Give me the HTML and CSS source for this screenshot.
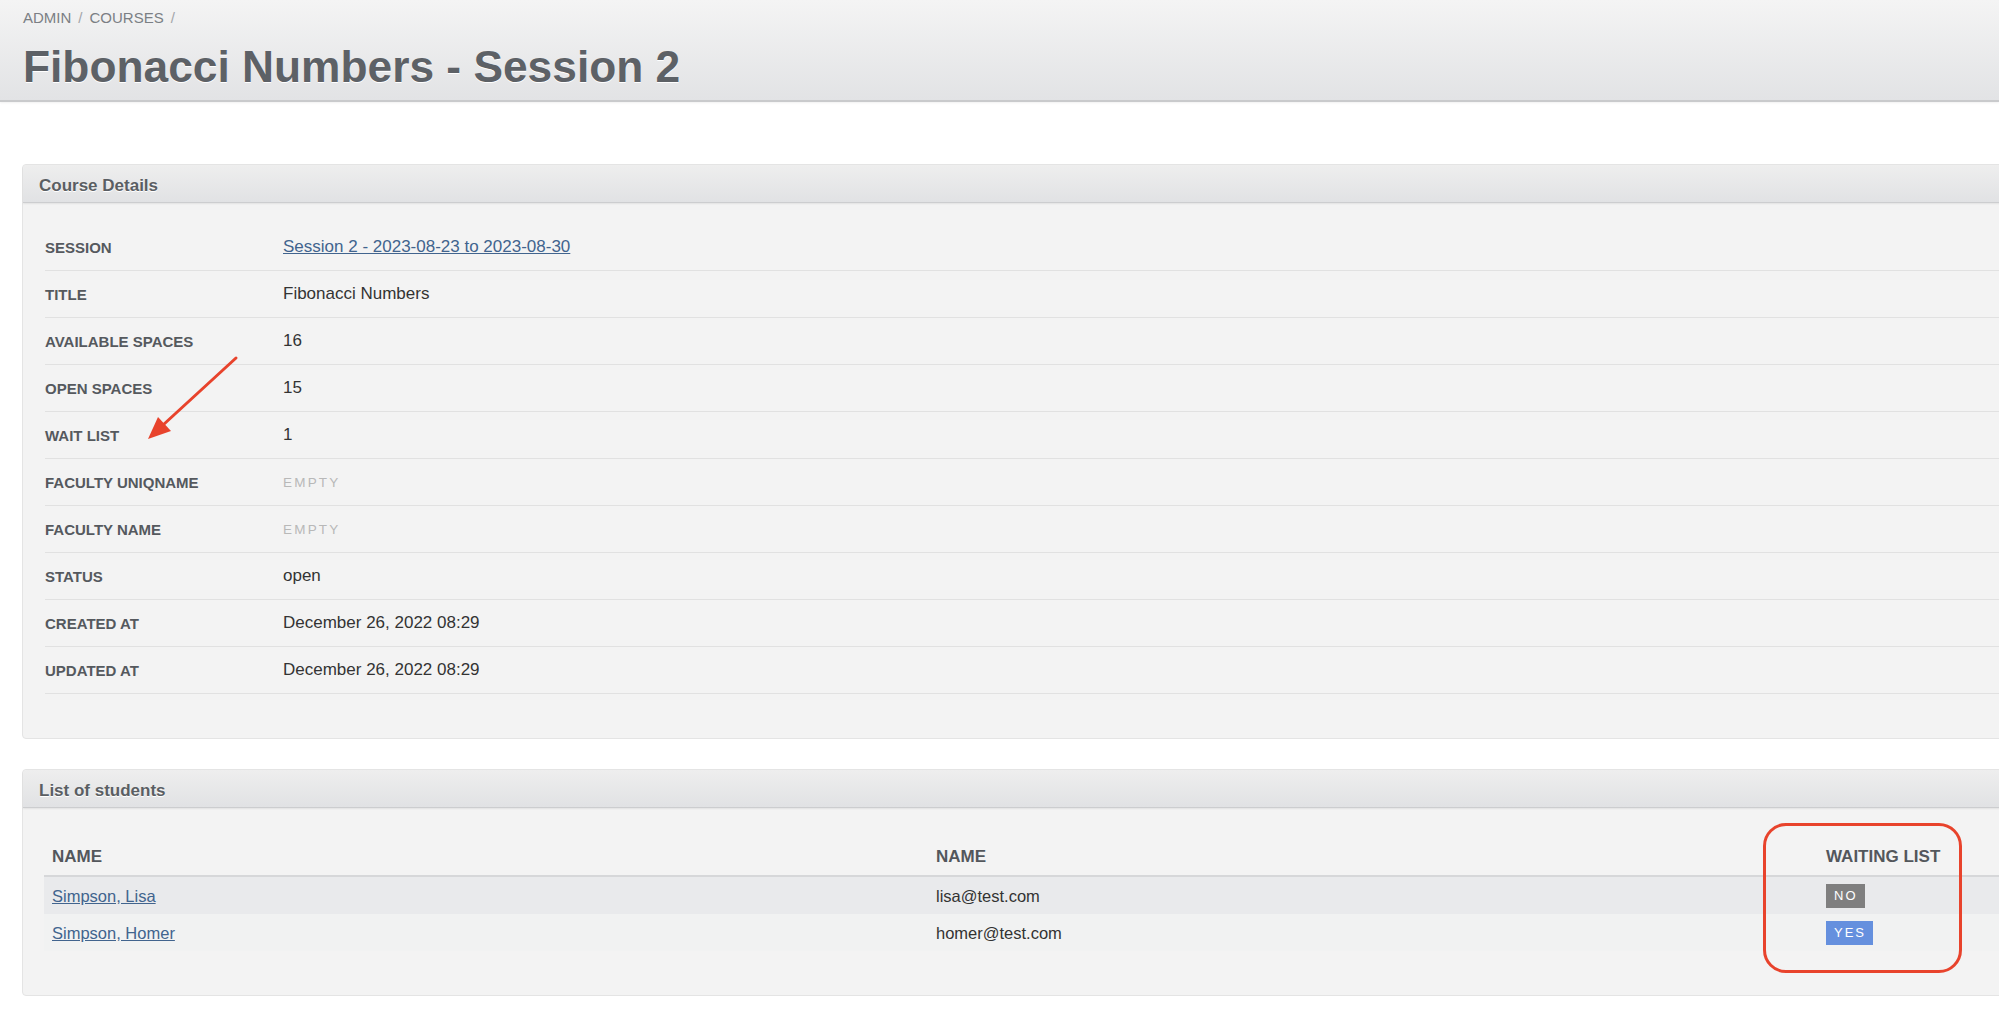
FILE: index.html
```html
<!DOCTYPE html>
<html lang="en">
<head>
<meta charset="utf-8">
<title>Fibonacci Numbers - Session 2</title>
<link rel="stylesheet" href="styles.css">
</head>
<body>
<header class="page-header">
  <nav class="breadcrumb"><span>ADMIN</span><span class="sep">/</span><span>COURSES</span><span class="sep">/</span></nav>
  <h1 class="page-title">Fibonacci Numbers - Session 2</h1>
</header>

<main class="content">
  <section class="panel">
    <div class="panel-heading">Course Details</div>
    <div class="panel-body">
      <dl class="details">
        <div class="detail-row"><dt>SESSION</dt><dd><a href="#">Session 2 - 2023-08-23 to 2023-08-30</a></dd></div>
        <div class="detail-row"><dt>TITLE</dt><dd>Fibonacci Numbers</dd></div>
        <div class="detail-row"><dt>AVAILABLE SPACES</dt><dd>16</dd></div>
        <div class="detail-row"><dt>OPEN SPACES</dt><dd>15</dd></div>
        <div class="detail-row"><dt>WAIT LIST</dt><dd>1</dd></div>
        <div class="detail-row"><dt>FACULTY UNIQNAME</dt><dd><span class="empty">EMPTY</span></dd></div>
        <div class="detail-row"><dt>FACULTY NAME</dt><dd><span class="empty">EMPTY</span></dd></div>
        <div class="detail-row"><dt>STATUS</dt><dd>open</dd></div>
        <div class="detail-row"><dt>CREATED AT</dt><dd>December 26, 2022 08:29</dd></div>
        <div class="detail-row"><dt>UPDATED AT</dt><dd>December 26, 2022 08:29</dd></div>
      </dl>
    </div>
  </section>

  <section class="panel">
    <div class="panel-heading">List of students</div>
    <div class="panel-body table-body">
      <table class="students">
        <colgroup><col class="c1"><col class="c2"><col></colgroup>
        <thead>
          <tr><th>NAME</th><th>NAME</th><th>WAITING LIST</th></tr>
        </thead>
        <tbody>
          <tr class="odd"><td><a href="#">Simpson, Lisa</a></td><td>lisa@test.com</td><td><span class="badge badge-no">NO</span></td></tr>
          <tr class="even"><td><a href="#">Simpson, Homer</a></td><td>homer@test.com</td><td><span class="badge badge-yes">YES</span></td></tr>
        </tbody>
      </table>
    </div>
  </section>
</main>

<svg class="annot-arrow" viewBox="140 350 105 95" width="105" height="95" aria-hidden="true">
  <line x1="236" y1="358" x2="163" y2="425" stroke="#e8432c" stroke-width="3" stroke-linecap="round"/>
  <polygon points="148,439 171,431 158,417" fill="#e8432c"/>
</svg>
<div class="annot-box" aria-hidden="true"></div>
</body>
</html>
```

FILE: styles.css
```css
html, body {
  margin: 0;
  padding: 0;
  overflow: hidden;
  background: #ffffff;
}

body {
  font-family: "Liberation Sans", Arial, Helvetica, sans-serif;
  color: #333333;
  position: relative;
  min-height: 1014px;
}

.page-header {
  background: linear-gradient(to bottom, #f4f4f4 0%, #e2e3e5 100%);
  border-bottom: 2px solid #c9cacc;
  box-shadow: 0 1px 2px rgba(0, 0, 0, 0.06);
  padding: 9px 23px 11px;
  height: 80px;
}

.breadcrumb {
  font-size: 15px;
  line-height: 18px;
  color: #7b7f84;
  display: flex;
  gap: 7px;
}

.breadcrumb .sep {
  color: #a3a6aa;
}

.page-title {
  margin: 18px 0 0;
  font-size: 44.3px;
  line-height: 44px;
  font-weight: bold;
  color: #5d6166;
  text-shadow: 0 1px 0 #ffffff;
}

.content {
  padding-top: 62px;
}

.panel {
  margin: 0 -30px 30px 22px;
  background: #f3f3f3;
  border: 1px solid #e4e4e4;
  border-radius: 4px;
}

.panel-heading {
  background: linear-gradient(to bottom, #eeeeee 0%, #e1e2e4 100%);
  border-bottom: 1px solid #cccdcf;
  box-shadow: 0 1px 2px rgba(0, 0, 0, 0.07);
  border-radius: 4px 4px 0 0;
  padding: 11px 16px 6px;
  font-size: 17px;
  line-height: 20px;
  font-weight: bold;
  color: #5a5e63;
  text-shadow: 0 1px 0 #ffffff;
}

.panel-body {
  padding: 21px 22px 44px;
}

.details {
  margin: 0;
}

.detail-row {
  display: flex;
  align-items: center;
  height: 46px;
  border-bottom: 1px solid #e1e1e1;
}

.detail-row dt {
  width: 238px;
  flex: none;
  font-size: 15px;
  font-weight: bold;
  color: #55595e;
}

.detail-row dd {
  margin: 0;
  font-size: 17px;
  color: #333333;
}

a {
  color: #41648e;
  text-decoration: underline;
}

.empty {
  font-size: 13.5px;
  letter-spacing: 2.2px;
  color: #b8b8b8;
}

.table-body {
  padding: 31px 21px 44px;
}

.students {
  width: 100%;
  border-collapse: collapse;
  table-layout: fixed;
}

.students col.c1 {
  width: 884px;
}

.students col.c2 {
  width: 890px;
}

.students th {
  text-align: left;
  font-size: 17px;
  line-height: 20px;
  font-weight: bold;
  color: #53575c;
  padding: 8px 8px 8px;
  border-bottom: 2px solid #d6d7d9;
}

.students td {
  font-size: 16.5px;
  line-height: 24px;
  height: 24px;
  padding: 7px 8px 6px;
  color: #333333;
  vertical-align: middle;
}

.students tr.odd td {
  background: #e9eaec;
}

.students tr.even td {
  background: #f1f2f2;
}

.badge {
  display: inline-block;
  font-size: 13px;
  line-height: 24px;
  height: 24px;
  padding: 0 7px 0 8px;
  letter-spacing: 2px;
  color: #ffffff;
  vertical-align: top;
}

.badge-no {
  background: #7f7f7f;
}

.badge-yes {
  background: #6590de;
}

.annot-arrow {
  position: absolute;
  left: 140px;
  top: 350px;
}

.annot-box {
  position: absolute;
  left: 1763px;
  top: 823px;
  width: 193px;
  height: 144px;
  border: 3px solid #e8432c;
  border-radius: 23px;
}
```
